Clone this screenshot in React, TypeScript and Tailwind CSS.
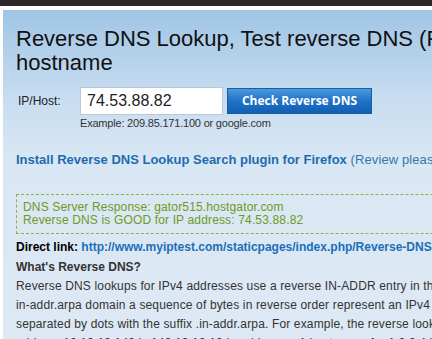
export default function App() {
  return (
    <div className="w-[432px] h-[339px] overflow-hidden bg-white relative" style={{ fontFamily: '"Liberation Sans", Arial, sans-serif' }}>
      <div className="h-[6px] bg-[#2a2a2a]" />
      <div className="mt-[4px] ml-[3px] w-[900px] h-[400px] bg-[linear-gradient(to_bottom,#a0c5e6_0px,#c8ddf0_90px,#d9e7f4_150px,#dfe9f4_100%)] pl-[13px] pt-[17px]">
        <h1 className="text-[22px] leading-[24px] text-[#111] font-normal whitespace-nowrap">
          Reverse DNS Lookup, Test reverse DNS (PTR) of an IP address or
          <br />
          hostname
        </h1>
        <div className="mt-[12px] flex items-center h-[28px]">
          <span className="w-[64px] pl-[2px] text-[12px] text-[#222]">IP/Host:</span>
          <div className="w-[143px] h-[28px] bg-white border border-[#b9c7d6] flex items-center pl-[6px] text-[16px] text-[#222]">
            74.53.88.82
          </div>
          <button
            className="ml-[4px] w-[145px] h-[26px] border border-[#1c5b9c] bg-[linear-gradient(to_bottom,#4a98e0,#1f72c6_50%,#125fb2)] text-white text-[12px] font-bold flex items-center justify-center"
            style={{ fontFamily: '"Open Sans", sans-serif' }}
          >
            Check Reverse DNS
          </button>
        </div>
        <div className="mt-[2px] pl-[64px] text-[11px] leading-[13px] tracking-[-0.2px] text-[#333]">
          Example: 209.85.171.100 or google.com
        </div>
        <div className="mt-[22px] text-[13px] leading-[15px] whitespace-nowrap">
          <span className="font-bold text-[#1c6cb0]">Install Reverse DNS Lookup Search plugin for Firefox</span>
          <span className="text-[#3a74ad] tracking-[0.1px]"> (Review please, it helps us)</span>
        </div>
        <div className="mt-[27px] border border-dashed border-[#8cb33a] pl-[6px] pt-[6px] pb-[6px] text-[12px] leading-[13px] tracking-[0.15px] text-[#6f9a22]">
          <div>DNS Server Response: gator515.hostgator.com</div>
          <div>Reverse DNS is GOOD for IP address: 74.53.88.82</div>
        </div>
        <div className="mt-[6px] text-[12px] leading-[14px] font-bold whitespace-nowrap">
          <span className="text-black">Direct link: </span>
          <span className="text-[#1a6fb8]">http://www.myiptest.com/staticpages/index.php/Reverse-DNS-Lookup</span>
        </div>
        <div className="mt-[6px] text-[12px] leading-[14px] font-bold text-[#333]">What's Reverse DNS?</div>
        <div className="mt-[3px] text-[12px] leading-[19px] tracking-[0.15px] text-[#333] whitespace-nowrap">
          <div>Reverse DNS lookups for IPv4 addresses use a reverse IN-ADDR entry in the special domain</div>
          <div>in-addr.arpa domain a sequence of bytes in reverse order represent an IPv4 address</div>
          <div>separated by dots with the suffix .in-addr.arpa. For example, the reverse lookup domain for</div>
          <div>address 12.13.13.149 is 149.13.13.12.in-addr.arpa. A host name for 1.2.3.4 is</div>
        </div>
      </div>
    </div>
  );
}
